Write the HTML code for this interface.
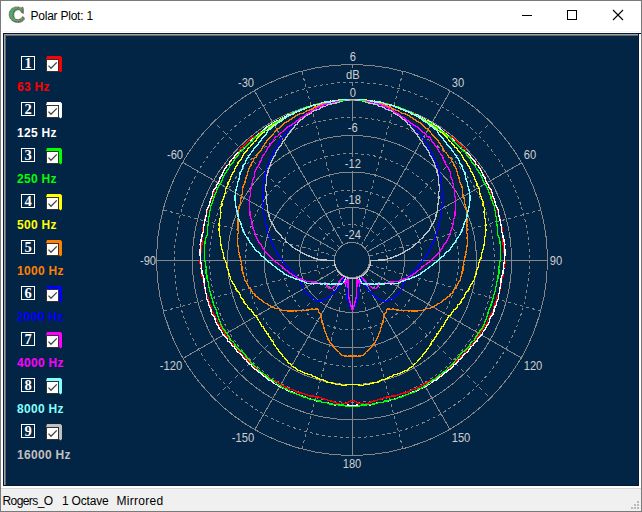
<!DOCTYPE html>
<html><head><meta charset="utf-8"><title>Polar Plot: 1</title>
<style>
html,body{margin:0;padding:0;}
body{width:642px;height:512px;position:relative;overflow:hidden;background:#fff;font-family:"Liberation Sans",sans-serif;}
.win{position:absolute;left:0;top:0;width:640px;height:510px;border:1px solid #7a7a7a;background:#fff;}
.title{position:absolute;left:30.5px;top:9px;font-size:12px;color:#000;white-space:nowrap;letter-spacing:-0.23px;}
.panel{position:absolute;left:3px;top:33px;width:636px;height:453px;background:#022445;}
.pb0{position:absolute;left:3px;top:33px;width:636px;height:453px;box-sizing:border-box;border:1px solid #001a38;}
.pb1{position:absolute;left:4px;top:34px;width:634px;height:451px;box-sizing:border-box;border-left:1px solid #a0a0a0;border-top:1px solid #a0a0a0;}
.pb2{position:absolute;left:5px;top:35px;width:633px;height:450px;box-sizing:border-box;border-left:1px solid #696969;border-top:1px solid #696969;}
.status{position:absolute;left:1px;top:488px;width:640px;height:23px;background:#f0f0f0;border-top:1px solid #d7d7d7;box-sizing:border-box;}
.status span{position:absolute;top:5px;font-size:12px;color:#000;white-space:nowrap;}
.nb{position:absolute;left:21px;width:12px;height:12px;border:1px solid #fff;color:#fff;font-weight:bold;font-family:"Liberation Serif",serif;font-size:14.5px;line-height:13px;text-align:center;}
.cs{position:absolute;left:46px;width:16px;height:17px;}
.cb{position:absolute;left:46px;width:11px;height:11px;background:#fff;border:1px solid #333;}
.cb svg{display:block}
.lb{position:absolute;left:17px;font-size:12px;font-weight:bold;white-space:nowrap;letter-spacing:0.3px;}
</style></head><body>
<div class="win"></div>
<svg style="position:absolute;left:0;top:0" width="32" height="30" viewBox="0 0 32 30"><path d="M22.8 7.2 L22.9 12.6 L21.4 12.6 C20.8 10.4 19.4 9.2 17.6 9.2 C14.8 9.2 13.2 11.4 13.2 14.4 C13.2 17.6 15 19.6 17.8 19.6 C19.8 19.6 21.4 18.6 22.6 16.6 L24.2 17.6 C22.6 20.4 20.2 21.9 17.2 21.9 C12.4 21.9 9.2 18.8 9.2 14.4 C9.2 10 12.4 6.9 17 6.9 C18.8 6.9 20.4 7.4 21.4 8.2 L21.8 7.2 Z" fill="#8e8e8e" transform="translate(1.1,1.1)"/><path d="M22.8 7.2 L22.9 12.6 L21.4 12.6 C20.8 10.4 19.4 9.2 17.6 9.2 C14.8 9.2 13.2 11.4 13.2 14.4 C13.2 17.6 15 19.6 17.8 19.6 C19.8 19.6 21.4 18.6 22.6 16.6 L24.2 17.6 C22.6 20.4 20.2 21.9 17.2 21.9 C12.4 21.9 9.2 18.8 9.2 14.4 C9.2 10 12.4 6.9 17 6.9 C18.8 6.9 20.4 7.4 21.4 8.2 L21.8 7.2 Z" fill="#3cb371" stroke="#9a1c1c" stroke-width="0.8" stroke-dasharray="1 0.5"/></svg>
<div style="position:absolute;left:1px;top:31px;width:640px;height:1px;background:#f4f4f4"></div><div class="title">Polar Plot: 1</div>
<svg style="position:absolute;left:520px;top:0" width="122" height="32" viewBox="0 0 122 32"><g fill="none" stroke="#000" stroke-width="1" shape-rendering="crispEdges"><path d="M2 15.5 H12"/><rect x="47.5" y="10.5" width="9" height="9"/></g><path d="M93 10 L103 20 M103 10 L93 20" stroke="#000" stroke-width="1.1" fill="none"/></svg>
<div class="panel"></div>
<svg width="636" height="453" viewBox="3 33 636 453" style="position:absolute;left:3px;top:33px" shape-rendering="crispEdges"><circle cx="352.0" cy="260.0" r="52.5" fill="none" stroke="#878787" stroke-width="1"/><circle cx="352.0" cy="260.0" r="88.0" fill="none" stroke="#878787" stroke-width="1"/><circle cx="352.0" cy="260.0" r="124.5" fill="none" stroke="#878787" stroke-width="1"/><circle cx="352.0" cy="260.0" r="159.7" fill="none" stroke="#878787" stroke-width="1"/><circle cx="352.0" cy="260.0" r="195.5" fill="none" stroke="#878787" stroke-width="1"/><circle cx="352.0" cy="260.0" r="35.2" fill="none" stroke="#878787" stroke-width="1" stroke-dasharray="3 3"/><circle cx="352.0" cy="260.0" r="70.0" fill="none" stroke="#878787" stroke-width="1" stroke-dasharray="3 3"/><circle cx="352.0" cy="260.0" r="106.4" fill="none" stroke="#878787" stroke-width="1" stroke-dasharray="3 3"/><circle cx="352.0" cy="260.0" r="142.4" fill="none" stroke="#878787" stroke-width="1" stroke-dasharray="3 3"/><circle cx="352.0" cy="260.0" r="177.6" fill="none" stroke="#878787" stroke-width="1" stroke-dasharray="3 3"/><line x1="352.5" y1="242.9" x2="352.5" y2="65.0" stroke="#878787" stroke-width="1"/><line x1="357.1" y1="243.5" x2="403.1" y2="71.7" stroke="#878787" stroke-width="1" stroke-dasharray="3.11 3.11"/><line x1="361.3" y1="245.3" x2="450.2" y2="91.2" stroke="#878787" stroke-width="1"/><line x1="364.9" y1="248.1" x2="490.7" y2="122.3" stroke="#878787" stroke-width="1" stroke-dasharray="4.24 4.24"/><line x1="367.7" y1="251.7" x2="521.8" y2="162.7" stroke="#878787" stroke-width="1"/><line x1="369.5" y1="255.9" x2="541.3" y2="209.9" stroke="#878787" stroke-width="1" stroke-dasharray="3.11 3.11"/><line x1="370.1" y1="260.5" x2="548.0" y2="260.5" stroke="#878787" stroke-width="1"/><line x1="369.5" y1="265.1" x2="541.3" y2="311.1" stroke="#878787" stroke-width="1" stroke-dasharray="3.11 3.11"/><line x1="367.7" y1="269.3" x2="521.8" y2="358.2" stroke="#878787" stroke-width="1"/><line x1="364.9" y1="272.9" x2="490.7" y2="398.7" stroke="#878787" stroke-width="1" stroke-dasharray="4.24 4.24"/><line x1="361.3" y1="275.7" x2="450.2" y2="429.8" stroke="#878787" stroke-width="1"/><line x1="357.1" y1="277.5" x2="403.1" y2="449.3" stroke="#878787" stroke-width="1" stroke-dasharray="3.11 3.11"/><line x1="352.5" y1="278.1" x2="352.5" y2="456.0" stroke="#878787" stroke-width="1"/><line x1="347.9" y1="277.5" x2="301.9" y2="449.3" stroke="#878787" stroke-width="1" stroke-dasharray="3.11 3.11"/><line x1="343.7" y1="275.7" x2="254.7" y2="429.8" stroke="#878787" stroke-width="1"/><line x1="340.1" y1="272.9" x2="214.3" y2="398.7" stroke="#878787" stroke-width="1" stroke-dasharray="4.24 4.24"/><line x1="337.3" y1="269.3" x2="183.2" y2="358.3" stroke="#878787" stroke-width="1"/><line x1="335.5" y1="265.1" x2="163.7" y2="311.1" stroke="#878787" stroke-width="1" stroke-dasharray="3.11 3.11"/><line x1="334.9" y1="260.5" x2="157.0" y2="260.5" stroke="#878787" stroke-width="1"/><line x1="335.5" y1="255.9" x2="163.7" y2="209.9" stroke="#878787" stroke-width="1" stroke-dasharray="3.11 3.11"/><line x1="337.3" y1="251.7" x2="183.2" y2="162.7" stroke="#878787" stroke-width="1"/><line x1="340.1" y1="248.1" x2="214.3" y2="122.3" stroke="#878787" stroke-width="1" stroke-dasharray="4.24 4.24"/><line x1="343.7" y1="245.3" x2="254.7" y2="91.2" stroke="#878787" stroke-width="1"/><line x1="347.9" y1="243.5" x2="301.9" y2="71.7" stroke="#878787" stroke-width="1" stroke-dasharray="3.11 3.11"/><circle cx="352.0" cy="260.0" r="17.5" fill="#022445" stroke="#878787" stroke-width="1"/><rect x="347.5" y="50" width="10" height="14" fill="#022445"/><rect x="344.5" y="68" width="16" height="14" fill="#022445"/><rect x="347.5" y="85.7" width="10" height="14" fill="#022445"/><rect x="344.5" y="121.19999999999999" width="16" height="14" fill="#022445"/><rect x="341.5" y="156.8" width="22" height="14" fill="#022445"/><rect x="341.5" y="193.1" width="22" height="14" fill="#022445"/><rect x="341.5" y="228.3" width="22" height="14" fill="#022445"/><path d="M352.5 400.0 L350.0 401.1 L347.5 402.9 L345.0 403.6 L342.5 404.1 L339.9 404.3 L337.5 403.4 L335.1 402.4 L332.7 401.6 L330.3 400.8 L327.9 400.2 L325.5 399.4 L323.1 398.8 L320.9 397.5 L318.5 397.0 L315.9 397.1 L313.6 396.1 L311.0 396.2 L308.6 395.6 L306.3 394.6 L304.0 393.7 L301.6 393.0 L299.0 392.9 L296.7 391.9 L294.7 390.4 L292.3 389.7 L289.7 389.2 L287.5 388.1 L285.3 386.9 L283.2 385.6 L280.8 384.7 L278.9 383.0 L276.8 381.6 L274.4 380.7 L272.0 379.9 L270.1 378.2 L268.0 376.7 L265.6 375.8 L263.7 374.1 L261.5 372.9 L259.6 371.2 L257.5 369.7 L255.6 368.2 L253.8 366.3 L252.1 364.5 L250.2 362.8 L248.6 360.9 L246.5 359.3 L244.9 357.4 L243.1 355.6 L241.1 354.0 L239.5 352.0 L238.3 349.7 L236.4 348.0 L234.8 346.0 L232.6 344.4 L230.9 342.5 L229.9 340.1 L228.3 338.1 L226.6 336.1 L225.1 334.1 L224.1 331.7 L222.4 329.7 L221.1 327.5 L219.7 325.3 L217.9 323.2 L217.4 320.6 L216.0 318.5 L215.1 316.0 L213.7 313.8 L212.2 311.6 L211.0 309.2 L211.1 306.4 L210.0 304.1 L209.0 301.6 L208.4 299.1 L207.7 296.6 L206.2 294.3 L205.5 291.8 L204.8 289.2 L204.6 286.6 L203.7 284.1 L203.5 281.4 L203.3 278.8 L202.1 276.3 L202.0 273.7 L201.5 271.1 L201.2 268.4 L200.8 265.8 L199.9 263.2 L200.1 260.5 L200.4 257.8 L200.1 255.2 L200.9 252.6 L201.7 250.0 L201.1 247.3 L202.0 244.7 L202.0 242.0 L201.8 239.3 L202.2 236.7 L202.5 234.1 L202.2 231.3 L202.6 228.6 L203.5 226.1 L204.2 223.5 L204.8 220.9 L204.7 218.1 L206.3 215.8 L206.8 213.2 L207.4 210.5 L208.2 208.0 L209.2 205.5 L209.7 202.8 L211.0 200.4 L212.2 198.0 L212.5 195.2 L214.0 192.9 L214.6 190.3 L215.3 187.6 L216.4 185.1 L218.1 182.9 L219.2 180.4 L219.8 177.6 L221.4 175.3 L222.8 173.0 L223.7 170.3 L225.1 167.9 L226.8 165.8 L228.5 163.7 L230.6 161.8 L232.0 159.4 L233.6 157.2 L236.0 155.6 L237.8 153.5 L239.3 151.2 L240.3 148.3 L242.7 146.8 L244.4 144.6 L246.7 143.0 L248.6 141.0 L250.4 138.9 L252.7 137.3 L255.4 136.2 L257.7 134.7 L259.4 132.4 L262.1 131.3 L264.2 129.6 L266.2 127.6 L268.3 125.8 L270.7 124.3 L273.2 123.1 L275.7 122.0 L278.2 120.8 L280.4 119.0 L282.9 117.9 L285.6 117.1 L287.9 115.4 L290.4 114.2 L293.0 113.3 L295.7 112.5 L298.1 111.0 L300.7 110.0 L303.3 109.0 L306.0 108.4 L308.5 107.1 L311.2 106.5 L313.8 105.2 L316.4 104.2 L319.2 103.7 L321.8 102.7 L324.7 102.8 L327.5 102.4 L330.2 101.6 L332.9 100.7 L335.7 100.5 L338.5 100.5 L341.3 100.2 L344.1 99.7 L346.9 99.7 L349.7 99.6 L352.5 99.5 L355.3 99.6 L358.1 99.7 L360.9 99.7 L363.7 100.2 L366.5 100.5 L369.3 100.5 L372.1 100.7 L374.8 101.6 L377.5 102.4 L380.3 102.8 L383.2 102.7 L385.8 103.7 L388.6 104.2 L391.2 105.2 L393.8 106.5 L396.5 107.1 L399.0 108.4 L401.7 109.0 L404.3 110.0 L406.9 111.0 L409.3 112.5 L412.0 113.3 L414.6 114.2 L417.1 115.4 L419.4 117.1 L422.1 117.9 L424.6 119.0 L426.8 120.8 L429.3 122.0 L431.8 123.1 L434.3 124.3 L436.7 125.8 L438.8 127.6 L440.8 129.6 L442.9 131.3 L445.6 132.4 L447.3 134.7 L449.6 136.2 L452.3 137.3 L454.6 138.9 L456.4 141.0 L458.3 143.0 L460.6 144.6 L462.3 146.8 L464.7 148.3 L465.7 151.2 L467.2 153.5 L469.0 155.6 L471.4 157.2 L473.0 159.4 L474.4 161.8 L476.5 163.7 L478.2 165.8 L479.9 167.9 L481.3 170.3 L482.2 173.0 L483.6 175.3 L485.2 177.6 L485.8 180.4 L486.9 182.9 L488.6 185.1 L489.7 187.6 L490.4 190.3 L491.0 192.9 L492.5 195.2 L492.8 198.0 L494.0 200.4 L495.3 202.8 L495.8 205.5 L496.8 208.0 L497.6 210.5 L498.2 213.2 L498.7 215.8 L500.3 218.1 L500.2 220.9 L500.8 223.5 L501.5 226.1 L502.4 228.6 L502.8 231.3 L502.5 234.1 L502.8 236.7 L503.2 239.3 L503.0 242.0 L503.0 244.7 L503.9 247.3 L503.3 250.0 L504.1 252.6 L504.9 255.2 L504.6 257.8 L504.9 260.5 L505.1 263.2 L504.2 265.8 L503.8 268.4 L503.5 271.1 L503.0 273.7 L502.9 276.3 L501.7 278.8 L501.5 281.4 L501.3 284.1 L500.4 286.6 L500.2 289.2 L499.5 291.8 L498.8 294.3 L497.3 296.6 L496.6 299.1 L496.0 301.6 L495.0 304.1 L493.9 306.4 L494.0 309.2 L492.8 311.6 L491.3 313.8 L489.9 316.0 L489.0 318.5 L487.6 320.6 L487.1 323.2 L485.3 325.3 L483.9 327.5 L482.6 329.7 L480.9 331.7 L479.9 334.1 L478.4 336.1 L476.7 338.1 L475.1 340.1 L474.1 342.5 L472.4 344.4 L470.2 346.0 L468.6 348.0 L466.7 349.7 L465.5 352.0 L463.9 354.0 L461.9 355.6 L460.1 357.4 L458.5 359.3 L456.4 360.9 L454.8 362.8 L452.9 364.5 L451.2 366.3 L449.4 368.2 L447.5 369.7 L445.4 371.2 L443.5 372.9 L441.3 374.1 L439.4 375.8 L437.0 376.7 L434.9 378.2 L433.0 379.9 L430.6 380.7 L428.2 381.6 L426.1 383.0 L424.2 384.7 L421.8 385.6 L419.7 386.9 L417.5 388.1 L415.3 389.2 L412.7 389.7 L410.3 390.4 L408.3 391.9 L406.0 392.9 L403.4 393.0 L401.0 393.7 L398.7 394.6 L396.4 395.6 L394.0 396.2 L391.4 396.1 L389.1 397.1 L386.5 397.0 L384.1 397.5 L381.9 398.8 L379.5 399.4 L377.1 400.2 L374.7 400.8 L372.3 401.6 L369.9 402.4 L367.5 403.4 L365.1 404.3 L362.5 404.1 L360.0 403.6 L357.5 402.9 L355.0 401.1 L352.5 400.0" fill="none" stroke="#ff0000" stroke-width="1.35" stroke-linejoin="round"/><path d="M352.5 405.7 L350.0 405.4 L347.5 405.0 L344.9 405.7 L342.4 404.6 L339.9 404.9 L337.3 404.8 L334.8 404.9 L332.3 404.5 L329.9 403.3 L327.4 403.0 L324.9 402.3 L322.3 402.5 L320.0 401.2 L317.3 401.6 L315.0 400.4 L312.7 399.4 L310.2 399.0 L307.7 398.4 L305.5 397.1 L303.1 396.2 L300.7 395.4 L298.3 394.6 L295.9 393.7 L293.7 392.5 L291.4 391.5 L288.7 391.3 L286.6 389.8 L284.5 388.4 L281.9 387.8 L279.6 386.7 L277.6 385.1 L275.2 384.2 L273.3 382.4 L271.4 380.7 L268.8 380.1 L266.8 378.5 L264.9 376.7 L262.6 375.5 L261.0 373.5 L258.9 372.1 L257.1 370.2 L254.6 369.2 L252.6 367.6 L251.5 365.1 L249.1 363.9 L247.2 362.2 L246.1 359.7 L243.7 358.5 L242.5 356.1 L240.6 354.4 L238.6 352.7 L236.8 350.9 L235.2 348.9 L233.9 346.7 L231.7 345.1 L230.5 342.8 L228.1 341.3 L227.1 338.9 L225.5 336.8 L223.3 335.1 L222.4 332.6 L220.8 330.5 L219.2 328.4 L218.2 326.0 L216.8 323.8 L215.4 321.5 L215.1 318.8 L213.8 316.5 L212.1 314.4 L211.2 311.9 L210.9 309.3 L209.9 306.8 L208.4 304.5 L208.3 301.9 L206.9 299.5 L206.6 296.9 L206.6 294.2 L205.2 291.8 L205.2 289.1 L204.7 286.6 L204.5 283.9 L203.9 281.4 L203.9 278.7 L203.2 276.2 L202.1 273.7 L202.0 271.0 L201.1 268.4 L201.5 265.8 L201.0 263.1 L200.3 260.5 L200.8 257.9 L200.1 255.2 L200.1 252.5 L200.1 249.8 L200.8 247.2 L200.0 244.5 L200.8 241.9 L201.1 239.2 L202.1 236.7 L202.2 234.0 L203.3 231.5 L203.6 228.9 L203.7 226.2 L204.3 223.5 L204.8 220.9 L205.5 218.3 L206.1 215.8 L206.3 213.0 L206.7 210.3 L207.9 207.9 L209.2 205.5 L209.8 202.8 L210.3 200.1 L211.4 197.7 L212.7 195.3 L212.8 192.4 L214.0 189.9 L215.8 187.8 L216.8 185.3 L218.1 182.9 L219.4 180.5 L220.0 177.7 L221.8 175.6 L222.7 172.9 L223.9 170.5 L225.4 168.2 L226.9 165.9 L229.1 164.1 L230.2 161.4 L231.8 159.2 L234.0 157.5 L235.2 154.9 L237.2 153.0 L239.8 151.6 L242.3 150.3 L244.2 148.4 L246.2 146.6 L248.3 144.7 L249.8 142.4 L251.5 140.1 L253.6 138.3 L255.8 136.7 L257.7 134.7 L259.9 133.1 L262.1 131.4 L264.1 129.4 L266.1 127.5 L268.4 126.0 L270.8 124.6 L273.1 123.0 L275.4 121.4 L278.2 120.7 L280.5 119.2 L282.9 117.9 L285.4 116.7 L287.7 115.0 L290.5 114.5 L293.2 113.7 L295.5 112.1 L298.3 111.5 L300.7 110.1 L303.4 109.4 L306.0 108.2 L308.5 107.0 L311.1 106.0 L313.7 104.9 L316.4 104.3 L319.2 103.7 L321.9 103.3 L324.7 102.8 L327.4 102.2 L330.1 101.0 L333.0 101.4 L335.7 100.9 L338.5 100.9 L341.3 100.5 L344.1 100.4 L346.9 99.7 L349.7 99.6 L352.5 99.5 L355.3 99.6 L358.1 99.7 L360.9 100.4 L363.7 100.5 L366.5 100.9 L369.3 100.9 L372.0 101.4 L374.9 101.0 L377.6 102.2 L380.3 102.8 L383.1 103.3 L385.8 103.7 L388.6 104.3 L391.3 104.9 L393.9 106.0 L396.5 107.0 L399.0 108.2 L401.6 109.4 L404.3 110.1 L406.7 111.5 L409.5 112.1 L411.8 113.7 L414.5 114.5 L417.3 115.0 L419.6 116.7 L422.1 117.9 L424.5 119.2 L426.8 120.7 L429.6 121.4 L431.9 123.0 L434.2 124.6 L436.6 126.0 L438.9 127.5 L440.9 129.4 L442.9 131.4 L445.1 133.1 L447.3 134.7 L449.2 136.7 L451.4 138.3 L453.5 140.1 L455.2 142.4 L456.7 144.7 L458.8 146.6 L460.8 148.4 L462.7 150.3 L465.2 151.6 L467.8 153.0 L469.8 154.9 L471.0 157.5 L473.2 159.2 L474.8 161.4 L475.9 164.1 L478.1 165.9 L479.6 168.2 L481.1 170.5 L482.3 172.9 L483.2 175.6 L485.0 177.7 L485.6 180.5 L486.9 182.9 L488.2 185.3 L489.2 187.8 L491.0 189.9 L492.2 192.4 L492.3 195.3 L493.6 197.7 L494.7 200.1 L495.2 202.8 L495.8 205.5 L497.1 207.9 L498.3 210.3 L498.7 213.0 L498.9 215.8 L499.5 218.3 L500.2 220.9 L500.7 223.5 L501.3 226.2 L501.4 228.9 L501.7 231.5 L502.8 234.0 L502.9 236.7 L503.9 239.2 L504.2 241.9 L505.0 244.5 L504.2 247.2 L504.9 249.8 L504.9 252.5 L504.9 255.2 L504.2 257.9 L504.7 260.5 L504.0 263.1 L503.5 265.8 L503.9 268.4 L503.0 271.0 L502.9 273.7 L501.8 276.2 L501.1 278.7 L501.1 281.4 L500.5 283.9 L500.3 286.6 L499.8 289.1 L499.8 291.8 L498.4 294.2 L498.4 296.9 L498.1 299.5 L496.7 301.9 L496.6 304.5 L495.1 306.8 L494.1 309.3 L493.8 311.9 L492.9 314.4 L491.2 316.5 L489.9 318.8 L489.6 321.5 L488.2 323.8 L486.8 326.0 L485.8 328.4 L484.2 330.5 L482.6 332.6 L481.7 335.1 L479.5 336.8 L477.9 338.9 L476.9 341.3 L474.5 342.8 L473.3 345.1 L471.1 346.7 L469.8 348.9 L468.2 350.9 L466.4 352.7 L464.4 354.4 L462.5 356.1 L461.3 358.5 L458.9 359.7 L457.8 362.2 L455.9 363.9 L453.5 365.1 L452.4 367.6 L450.4 369.2 L447.9 370.2 L446.1 372.1 L444.0 373.5 L442.4 375.5 L440.1 376.7 L438.2 378.5 L436.2 380.1 L433.6 380.7 L431.7 382.4 L429.8 384.2 L427.4 385.1 L425.4 386.7 L423.1 387.8 L420.5 388.4 L418.4 389.8 L416.3 391.3 L413.6 391.5 L411.3 392.5 L409.1 393.7 L406.7 394.6 L404.3 395.4 L401.9 396.2 L399.5 397.1 L397.3 398.4 L394.8 399.0 L392.3 399.4 L390.0 400.4 L387.7 401.6 L385.0 401.2 L382.7 402.5 L380.1 402.3 L377.6 403.0 L375.1 403.3 L372.7 404.5 L370.2 404.9 L367.7 404.8 L365.1 404.9 L362.6 404.6 L360.1 405.7 L357.5 405.0 L355.0 405.4 L352.5 405.7" fill="none" stroke="#ffffff" stroke-width="1.35" stroke-linejoin="round"/><path d="M352.5 406.0 L350.0 406.5 L347.4 406.3 L344.9 405.7 L342.4 404.8 L339.8 405.3 L337.4 404.4 L334.8 404.6 L332.4 403.9 L329.8 403.9 L327.4 402.9 L324.9 402.7 L322.4 402.3 L320.1 401.0 L317.5 401.0 L315.1 399.9 L312.7 399.4 L310.1 399.3 L307.8 398.1 L305.4 397.3 L302.9 396.7 L300.6 395.8 L298.4 394.4 L295.9 393.9 L293.5 393.0 L291.1 392.1 L288.9 390.8 L287.0 389.1 L284.5 388.4 L282.2 387.3 L280.2 385.7 L277.8 384.8 L276.0 382.9 L274.1 381.2 L272.1 379.7 L269.5 379.1 L267.8 377.1 L265.8 375.5 L263.9 373.9 L261.7 372.6 L259.8 370.9 L258.1 369.1 L256.4 367.3 L254.3 365.8 L252.6 364.0 L250.9 362.1 L249.3 360.1 L247.4 358.5 L246.1 356.3 L244.6 354.3 L242.9 352.5 L240.8 351.0 L238.7 349.4 L236.9 347.6 L235.3 345.7 L234.3 343.3 L232.6 341.4 L230.3 339.9 L229.6 337.3 L227.7 335.5 L226.7 333.1 L225.2 331.1 L223.6 329.0 L222.2 326.9 L221.1 324.6 L220.2 322.2 L219.0 319.9 L218.6 317.4 L217.5 315.0 L216.9 312.6 L216.4 310.0 L215.1 307.8 L214.1 305.5 L213.3 303.1 L212.6 300.6 L211.9 298.2 L211.3 295.7 L210.4 293.3 L209.8 290.8 L209.7 288.3 L208.4 285.9 L208.6 283.3 L207.7 280.8 L206.9 278.4 L207.1 275.8 L206.1 273.3 L205.9 270.7 L206.3 268.2 L205.8 265.6 L205.5 263.1 L204.8 260.5 L204.6 257.9 L204.3 255.3 L204.3 252.7 L204.6 250.2 L204.6 247.6 L204.7 245.0 L205.0 242.4 L205.3 239.8 L206.0 237.3 L207.4 234.9 L207.5 232.3 L207.5 229.7 L207.5 227.0 L208.1 224.5 L208.9 222.0 L208.3 219.2 L208.9 216.6 L209.7 214.1 L209.7 211.3 L210.8 208.9 L210.8 206.1 L212.0 203.7 L212.8 201.2 L213.8 198.7 L214.2 196.0 L215.4 193.6 L216.5 191.2 L217.3 188.6 L218.7 186.3 L220.2 184.1 L221.5 181.8 L222.5 179.3 L223.4 176.7 L224.6 174.2 L226.3 172.1 L227.5 169.7 L229.3 167.7 L230.2 164.9 L232.4 163.3 L233.6 160.8 L235.2 158.6 L237.1 156.6 L238.5 154.2 L240.0 151.9 L242.3 150.3 L243.7 147.9 L246.2 146.6 L248.1 144.5 L250.0 142.6 L252.2 140.9 L253.8 138.7 L256.0 136.9 L258.1 135.2 L260.1 133.3 L262.5 132.0 L264.7 130.4 L266.7 128.3 L268.8 126.6 L271.5 125.6 L273.4 123.5 L275.9 122.3 L278.3 120.9 L280.8 119.8 L283.0 118.0 L285.7 117.2 L288.0 115.7 L290.5 114.5 L292.8 112.8 L295.5 111.9 L297.9 110.5 L300.6 109.7 L303.1 108.6 L305.7 107.4 L308.4 106.6 L311.1 106.2 L313.7 105.1 L316.5 104.8 L319.1 103.3 L321.9 103.3 L324.6 102.2 L327.4 102.2 L330.2 101.8 L332.9 100.9 L335.7 100.8 L338.5 100.4 L341.3 100.2 L344.1 99.9 L346.9 99.7 L349.7 99.6 L352.5 99.5 L355.3 99.6 L358.1 99.7 L360.9 99.9 L363.7 100.2 L366.5 100.4 L369.3 100.8 L372.1 100.9 L374.8 101.8 L377.6 102.2 L380.4 102.2 L383.1 103.3 L385.9 103.3 L388.5 104.8 L391.3 105.1 L393.9 106.2 L396.6 106.6 L399.3 107.4 L401.9 108.6 L404.4 109.7 L407.1 110.5 L409.5 111.9 L412.2 112.8 L414.5 114.5 L417.0 115.7 L419.3 117.2 L422.0 118.0 L424.2 119.8 L426.7 120.9 L429.1 122.3 L431.6 123.5 L433.5 125.6 L436.2 126.6 L438.3 128.3 L440.3 130.4 L442.5 132.0 L444.9 133.3 L446.9 135.2 L449.0 136.9 L451.2 138.7 L452.8 140.9 L455.0 142.6 L456.9 144.5 L458.8 146.6 L461.3 147.9 L462.7 150.3 L465.0 151.9 L466.5 154.2 L467.9 156.6 L469.8 158.6 L471.4 160.8 L472.6 163.3 L474.8 164.9 L475.7 167.7 L477.5 169.7 L478.7 172.1 L480.4 174.2 L481.6 176.7 L482.5 179.3 L483.5 181.8 L484.8 184.1 L486.3 186.3 L487.7 188.6 L488.5 191.2 L489.6 193.6 L490.8 196.0 L491.2 198.7 L492.2 201.2 L493.0 203.7 L494.2 206.1 L494.2 208.9 L495.3 211.3 L495.3 214.1 L496.1 216.6 L496.7 219.2 L496.1 222.0 L496.9 224.5 L497.5 227.0 L497.5 229.7 L497.5 232.3 L497.6 234.9 L499.0 237.3 L499.7 239.8 L500.0 242.4 L500.3 245.0 L500.4 247.6 L500.4 250.2 L500.7 252.7 L500.7 255.3 L500.4 257.9 L500.2 260.5 L499.5 263.1 L499.2 265.6 L498.7 268.2 L499.1 270.7 L498.9 273.3 L497.9 275.8 L498.1 278.4 L497.3 280.8 L496.4 283.3 L496.6 285.9 L495.3 288.3 L495.2 290.8 L494.6 293.3 L493.7 295.7 L493.1 298.2 L492.4 300.6 L491.7 303.1 L490.9 305.5 L489.9 307.8 L488.6 310.0 L488.1 312.6 L487.5 315.0 L486.4 317.4 L486.0 319.9 L484.8 322.2 L483.9 324.6 L482.8 326.9 L481.4 329.0 L479.8 331.1 L478.3 333.1 L477.3 335.5 L475.4 337.3 L474.7 339.9 L472.4 341.4 L470.7 343.3 L469.7 345.7 L468.1 347.6 L466.3 349.4 L464.2 351.0 L462.1 352.5 L460.4 354.3 L458.9 356.3 L457.6 358.5 L455.7 360.1 L454.1 362.1 L452.4 364.0 L450.7 365.8 L448.6 367.3 L446.9 369.1 L445.2 370.9 L443.3 372.6 L441.1 373.9 L439.2 375.5 L437.2 377.1 L435.5 379.1 L432.9 379.7 L430.9 381.2 L429.0 382.9 L427.2 384.8 L424.8 385.7 L422.8 387.3 L420.5 388.4 L418.0 389.1 L416.1 390.8 L413.9 392.1 L411.5 393.0 L409.1 393.9 L406.6 394.4 L404.4 395.8 L402.1 396.7 L399.6 397.3 L397.2 398.1 L394.9 399.3 L392.3 399.4 L389.9 399.9 L387.5 401.0 L384.9 401.0 L382.6 402.3 L380.1 402.7 L377.6 402.9 L375.2 403.9 L372.6 403.9 L370.2 404.6 L367.6 404.4 L365.2 405.3 L362.6 404.8 L360.1 405.7 L357.6 406.3 L355.0 406.5 L352.5 406.0" fill="none" stroke="#00ff00" stroke-width="1.35" stroke-linejoin="round"/><path d="M352.5 384.9 L350.3 384.5 L348.2 384.7 L346.0 385.0 L343.8 385.3 L341.6 385.2 L339.5 384.0 L337.3 384.5 L335.1 384.0 L333.1 383.2 L330.9 382.9 L328.8 382.4 L326.7 381.9 L324.8 380.6 L322.8 379.8 L320.6 379.7 L318.7 378.4 L316.6 377.9 L314.8 376.5 L312.7 376.1 L311.0 374.5 L308.8 374.4 L306.8 373.7 L304.6 373.3 L302.8 372.1 L300.9 371.2 L298.9 370.4 L296.8 369.8 L295.5 367.8 L293.4 367.0 L291.7 365.8 L290.4 363.8 L288.6 362.8 L287.2 361.1 L285.8 359.4 L284.6 357.4 L282.9 356.3 L281.7 354.4 L280.4 352.7 L278.6 351.7 L277.9 349.4 L276.7 347.7 L275.3 346.3 L274.2 344.5 L273.3 342.5 L272.4 340.6 L270.9 339.3 L269.8 337.6 L268.6 336.1 L268.0 333.9 L266.5 332.7 L265.4 331.0 L264.5 329.2 L263.7 327.4 L262.0 326.2 L261.2 324.4 L260.0 322.9 L259.1 321.1 L258.0 319.5 L257.1 317.8 L256.2 316.1 L254.3 314.9 L253.2 313.3 L252.3 311.5 L251.1 310.0 L249.1 308.7 L247.9 307.0 L247.3 305.2 L245.3 303.8 L244.0 302.1 L243.6 300.1 L242.0 298.6 L240.6 296.8 L240.3 294.8 L239.2 293.0 L237.5 291.3 L236.1 289.5 L235.8 287.4 L234.6 285.6 L233.1 283.7 L232.4 281.7 L230.8 279.8 L230.7 277.6 L229.5 275.6 L228.9 273.5 L228.5 271.3 L227.9 269.2 L226.5 267.1 L226.6 264.9 L226.0 262.7 L225.3 260.5 L224.0 258.3 L223.6 256.0 L223.5 253.7 L222.7 251.4 L221.8 249.1 L221.3 246.7 L220.9 244.3 L220.2 241.9 L220.5 239.6 L220.2 237.2 L219.5 234.7 L219.7 232.3 L218.9 229.7 L219.5 227.3 L219.0 224.7 L219.4 222.3 L219.7 219.9 L220.2 217.5 L220.4 215.0 L220.9 212.6 L220.7 209.9 L220.8 207.3 L222.1 205.2 L221.7 202.3 L222.6 199.9 L223.7 197.7 L224.5 195.3 L225.4 192.9 L225.5 190.1 L226.3 187.7 L227.8 185.6 L228.1 182.8 L229.7 180.8 L230.3 178.1 L231.3 175.7 L232.7 173.4 L234.0 171.2 L235.0 168.7 L236.3 166.4 L237.6 164.1 L238.6 161.5 L240.6 159.7 L242.2 157.6 L243.3 155.0 L244.8 152.8 L246.7 150.9 L247.9 148.3 L250.2 146.9 L251.9 144.8 L253.4 142.5 L255.5 140.7 L257.3 138.6 L259.2 136.6 L260.9 134.5 L263.1 132.9 L265.5 131.5 L267.5 129.6 L269.6 127.9 L272.1 126.7 L274.1 124.7 L276.7 123.7 L278.7 121.7 L281.0 120.3 L283.5 119.0 L285.9 117.6 L288.3 116.2 L290.5 114.4 L293.3 114.0 L295.5 111.9 L298.2 111.2 L300.6 109.7 L303.5 109.6 L305.9 108.2 L308.5 106.9 L311.1 106.0 L313.9 105.5 L316.5 104.5 L319.3 104.3 L321.9 103.1 L324.6 102.5 L327.5 102.3 L330.2 101.7 L332.9 101.0 L335.7 101.0 L338.5 100.1 L341.3 99.9 L344.1 100.0 L346.9 99.7 L349.7 99.6 L352.5 99.5 L355.3 99.6 L358.1 99.7 L360.9 100.0 L363.7 99.9 L366.5 100.1 L369.3 101.0 L372.1 101.0 L374.8 101.7 L377.5 102.3 L380.4 102.5 L383.1 103.1 L385.7 104.3 L388.5 104.5 L391.1 105.5 L393.9 106.0 L396.5 106.9 L399.1 108.2 L401.5 109.6 L404.4 109.7 L406.8 111.2 L409.5 111.9 L411.7 114.0 L414.5 114.4 L416.7 116.2 L419.1 117.6 L421.5 119.0 L424.0 120.3 L426.3 121.7 L428.3 123.7 L430.9 124.7 L432.9 126.7 L435.4 127.9 L437.5 129.6 L439.5 131.5 L441.9 132.9 L444.1 134.5 L445.8 136.6 L447.7 138.6 L449.5 140.7 L451.6 142.5 L453.1 144.8 L454.8 146.9 L457.1 148.3 L458.3 150.9 L460.2 152.8 L461.7 155.0 L462.8 157.6 L464.4 159.7 L466.4 161.5 L467.4 164.1 L468.7 166.4 L470.0 168.7 L471.0 171.2 L472.3 173.4 L473.7 175.7 L474.7 178.1 L475.3 180.8 L476.9 182.8 L477.2 185.6 L478.7 187.7 L479.5 190.1 L479.6 192.9 L480.5 195.3 L481.3 197.7 L482.4 199.9 L483.3 202.3 L482.9 205.2 L484.2 207.3 L484.3 209.9 L484.1 212.6 L484.6 215.0 L484.8 217.5 L485.3 219.9 L485.6 222.3 L486.0 224.7 L485.5 227.3 L486.1 229.7 L485.3 232.3 L485.5 234.7 L484.8 237.2 L484.5 239.6 L484.8 241.9 L484.1 244.3 L483.7 246.7 L483.2 249.1 L482.3 251.4 L481.5 253.7 L481.4 256.0 L481.0 258.3 L479.7 260.5 L479.0 262.7 L478.4 264.9 L478.5 267.1 L477.1 269.2 L476.5 271.3 L476.1 273.5 L475.5 275.6 L474.3 277.6 L474.2 279.8 L472.6 281.7 L471.9 283.7 L470.4 285.6 L469.2 287.4 L468.9 289.5 L467.5 291.3 L465.8 293.0 L464.7 294.8 L464.4 296.8 L463.0 298.6 L461.4 300.1 L461.0 302.1 L459.7 303.8 L457.7 305.2 L457.1 307.0 L455.9 308.7 L453.9 310.0 L452.7 311.5 L451.8 313.3 L450.7 314.9 L448.8 316.1 L447.9 317.8 L447.0 319.5 L445.9 321.1 L445.0 322.9 L443.8 324.4 L443.0 326.2 L441.3 327.4 L440.5 329.2 L439.6 331.0 L438.5 332.7 L437.0 333.9 L436.4 336.1 L435.2 337.6 L434.1 339.3 L432.6 340.6 L431.7 342.5 L430.8 344.5 L429.7 346.3 L428.3 347.7 L427.1 349.4 L426.4 351.7 L424.6 352.7 L423.3 354.4 L422.1 356.3 L420.4 357.4 L419.2 359.4 L417.8 361.1 L416.4 362.8 L414.6 363.8 L413.3 365.8 L411.6 367.0 L409.5 367.8 L408.2 369.8 L406.1 370.4 L404.1 371.2 L402.2 372.1 L400.4 373.3 L398.2 373.7 L396.2 374.4 L394.0 374.5 L392.3 376.1 L390.2 376.5 L388.4 377.9 L386.3 378.4 L384.4 379.7 L382.2 379.8 L380.2 380.6 L378.3 381.9 L376.2 382.4 L374.1 382.9 L371.9 383.2 L369.9 384.0 L367.7 384.5 L365.5 384.0 L363.4 385.2 L361.2 385.3 L359.0 385.0 L356.8 384.7 L354.7 384.5 L352.5 384.9" fill="none" stroke="#ffff00" stroke-width="1.35" stroke-linejoin="round"/><path d="M352.5 356.7 L350.8 355.9 L349.2 356.1 L347.5 356.3 L345.8 356.0 L344.2 355.8 L342.5 355.4 L340.9 354.6 L339.6 352.4 L338.1 351.4 L336.6 350.4 L335.3 348.8 L334.0 347.5 L332.7 346.1 L331.6 344.3 L330.4 343.1 L329.4 341.1 L328.3 339.8 L327.5 337.4 L326.6 335.7 L325.9 333.5 L325.2 331.6 L324.3 330.3 L324.1 327.5 L323.4 325.8 L322.7 324.3 L322.1 322.8 L321.9 320.5 L321.3 319.3 L321.1 317.2 L320.9 315.2 L320.4 314.0 L319.4 313.5 L318.9 312.3 L318.5 311.0 L318.0 309.8 L317.4 308.8 L316.0 308.9 L314.2 309.5 L313.1 309.2 L311.8 309.0 L309.7 309.7 L308.0 310.0 L306.3 310.1 L304.3 310.4 L302.7 310.3 L300.7 310.6 L299.0 310.4 L296.6 310.9 L294.6 310.8 L292.1 311.2 L290.3 310.9 L287.9 311.0 L285.9 310.7 L283.7 310.5 L281.6 310.1 L280.3 309.2 L278.2 308.7 L275.6 308.6 L274.0 307.6 L272.1 306.9 L270.5 306.0 L268.3 305.2 L267.2 304.0 L265.1 303.1 L263.8 301.9 L262.4 300.6 L260.5 299.6 L259.1 298.2 L257.4 297.0 L255.4 295.8 L254.6 294.2 L252.8 292.9 L251.6 291.4 L251.4 289.5 L249.4 288.1 L248.5 286.4 L247.6 284.7 L246.7 283.0 L245.8 281.2 L244.3 279.6 L244.6 277.6 L243.7 275.8 L243.2 273.9 L243.0 272.0 L242.0 270.2 L242.0 268.2 L241.9 266.3 L241.0 264.4 L241.5 262.4 L240.7 260.5 L240.3 258.5 L240.0 256.6 L239.1 254.6 L239.3 252.6 L238.2 250.5 L238.5 248.5 L238.1 246.5 L237.8 244.4 L237.8 242.3 L237.4 240.2 L238.0 238.2 L237.4 236.0 L237.9 234.0 L238.5 232.1 L237.6 229.7 L238.2 227.7 L238.0 225.5 L238.2 223.4 L237.9 221.0 L238.0 218.8 L238.5 216.8 L238.6 214.5 L238.7 212.2 L238.6 209.8 L239.0 207.6 L239.4 205.3 L240.5 203.4 L240.7 201.1 L240.8 198.6 L241.5 196.4 L242.2 194.2 L242.4 191.7 L242.5 189.1 L243.0 186.7 L243.8 184.4 L244.9 182.4 L245.7 180.1 L246.1 177.3 L247.2 175.2 L247.7 172.6 L248.5 170.1 L249.4 167.7 L250.9 165.8 L251.4 162.8 L253.1 161.1 L253.9 158.4 L256.1 157.1 L257.3 154.7 L259.0 152.9 L260.8 151.2 L261.8 148.4 L263.3 146.3 L264.7 144.0 L266.3 141.8 L267.8 139.6 L269.7 137.7 L271.5 135.8 L273.3 133.8 L275.1 131.7 L277.0 129.7 L279.1 128.1 L281.3 126.5 L283.2 124.5 L285.2 122.5 L287.7 121.4 L289.8 119.7 L292.2 118.4 L294.5 116.8 L296.8 115.4 L299.2 114.1 L301.9 113.5 L304.4 112.5 L306.7 110.6 L309.4 110.3 L311.9 109.0 L314.3 107.2 L317.0 106.6 L319.4 105.0 L322.1 104.1 L324.9 103.7 L327.6 103.1 L330.2 102.0 L333.0 102.0 L335.8 101.5 L338.6 101.3 L341.3 100.8 L344.1 100.0 L346.9 99.9 L349.7 99.7 L352.5 99.5 L355.3 99.7 L358.1 99.9 L360.9 100.0 L363.7 100.8 L366.4 101.3 L369.2 101.5 L372.0 102.0 L374.8 102.0 L377.4 103.1 L380.1 103.7 L382.9 104.1 L385.6 105.0 L388.0 106.6 L390.7 107.2 L393.1 109.0 L395.6 110.3 L398.3 110.6 L400.6 112.5 L403.1 113.5 L405.8 114.1 L408.2 115.4 L410.5 116.8 L412.8 118.4 L415.2 119.7 L417.3 121.4 L419.8 122.5 L421.8 124.5 L423.7 126.5 L425.9 128.1 L428.0 129.7 L429.9 131.7 L431.7 133.8 L433.5 135.8 L435.3 137.7 L437.2 139.6 L438.7 141.8 L440.3 144.0 L441.7 146.3 L443.2 148.4 L444.2 151.2 L446.0 152.9 L447.7 154.7 L448.9 157.1 L451.1 158.4 L451.9 161.1 L453.6 162.8 L454.1 165.8 L455.6 167.7 L456.5 170.1 L457.3 172.6 L457.8 175.2 L458.9 177.3 L459.3 180.1 L460.1 182.4 L461.2 184.4 L462.0 186.7 L462.5 189.1 L462.6 191.7 L462.8 194.2 L463.5 196.4 L464.2 198.6 L464.3 201.1 L464.5 203.4 L465.6 205.3 L466.0 207.6 L466.4 209.8 L466.3 212.2 L466.4 214.5 L466.5 216.8 L467.0 218.8 L467.1 221.0 L466.8 223.4 L467.0 225.5 L466.8 227.7 L467.4 229.7 L466.5 232.1 L467.1 234.0 L467.6 236.0 L467.0 238.2 L467.6 240.2 L467.2 242.3 L467.2 244.4 L466.9 246.5 L466.5 248.5 L466.8 250.5 L465.7 252.6 L465.9 254.6 L465.0 256.6 L464.7 258.5 L464.3 260.5 L463.5 262.4 L464.0 264.4 L463.1 266.3 L463.0 268.2 L463.0 270.2 L462.0 272.0 L461.8 273.9 L461.3 275.8 L460.4 277.6 L460.7 279.6 L459.2 281.2 L458.3 283.0 L457.4 284.7 L456.5 286.4 L455.6 288.1 L453.6 289.5 L453.4 291.4 L452.2 292.9 L450.4 294.2 L449.6 295.8 L447.6 297.0 L445.9 298.2 L444.5 299.6 L442.6 300.6 L441.2 301.9 L439.9 303.1 L437.8 304.0 L436.7 305.2 L434.5 306.0 L432.9 306.9 L431.0 307.6 L429.4 308.6 L426.8 308.7 L424.7 309.2 L423.4 310.1 L421.3 310.5 L419.1 310.7 L417.1 311.0 L414.7 310.9 L412.9 311.2 L410.4 310.8 L408.4 310.9 L406.0 310.4 L404.3 310.6 L402.3 310.3 L400.7 310.4 L398.7 310.1 L397.0 310.0 L395.3 309.7 L393.2 309.0 L391.9 309.2 L390.8 309.5 L389.0 308.9 L387.6 308.8 L387.0 309.8 L386.5 311.0 L386.1 312.3 L385.6 313.5 L384.6 314.0 L384.1 315.2 L383.9 317.2 L383.7 319.3 L383.1 320.5 L382.9 322.8 L382.3 324.3 L381.6 325.8 L380.9 327.5 L380.7 330.3 L379.8 331.6 L379.1 333.5 L378.4 335.7 L377.5 337.4 L376.7 339.8 L375.6 341.1 L374.6 343.1 L373.4 344.3 L372.3 346.1 L371.0 347.5 L369.7 348.8 L368.4 350.4 L366.9 351.4 L365.4 352.4 L364.1 354.6 L362.5 355.4 L360.8 355.8 L359.2 356.0 L357.5 356.3 L355.8 356.1 L354.2 355.9 L352.5 356.7" fill="none" stroke="#ff8000" stroke-width="1.35" stroke-linejoin="round"/><path d="M352.5 310.5 L351.7 308.4 L350.9 307.2 L350.1 306.4 L349.4 304.6 L348.7 304.2 L348.1 301.9 L347.6 300.5 L347.2 298.1 L347.1 294.9 L346.7 293.5 L346.5 291.1 L346.5 288.6 L346.6 286.2 L346.8 283.3 L347.4 279.6 L347.5 277.8 L347.2 277.7 L346.9 277.6 L346.6 277.5 L346.3 277.4 L346.0 277.3 L345.8 277.2 L345.5 277.1 L345.2 276.9 L344.2 278.3 L342.4 281.3 L339.9 285.3 L337.7 288.3 L335.5 291.2 L334.0 292.5 L332.2 294.3 L330.2 296.2 L328.5 297.5 L327.0 298.3 L325.3 299.4 L324.1 299.6 L322.3 300.6 L320.8 301.0 L319.5 301.3 L318.5 301.0 L317.3 301.0 L316.7 300.3 L315.2 300.5 L314.8 299.6 L314.1 298.9 L313.4 298.3 L311.9 298.4 L311.0 297.9 L310.3 297.2 L309.9 296.2 L309.2 295.6 L308.7 294.7 L307.6 294.4 L307.2 293.4 L306.5 292.7 L305.7 292.1 L305.3 291.2 L304.5 290.5 L303.7 289.8 L303.4 288.8 L303.1 287.9 L302.3 287.2 L302.6 285.9 L301.7 285.3 L301.6 284.3 L301.0 283.4 L300.8 282.4 L300.2 281.6 L299.8 280.7 L299.0 280.0 L298.5 279.1 L297.5 278.4 L297.4 277.4 L296.7 276.5 L296.0 275.6 L294.3 275.0 L294.4 273.9 L292.9 273.2 L292.3 272.2 L291.3 271.3 L290.5 270.3 L289.2 269.4 L288.2 268.4 L288.2 267.3 L286.6 266.3 L286.0 265.1 L285.4 264.0 L283.7 262.9 L283.3 261.7 L282.4 260.5 L281.4 259.3 L280.8 258.0 L279.4 256.7 L278.1 255.3 L277.8 254.0 L276.4 252.5 L276.2 251.1 L275.3 249.6 L274.8 248.2 L273.3 246.5 L273.4 245.1 L272.0 243.4 L271.9 241.9 L271.0 240.2 L269.6 238.3 L269.7 236.8 L269.0 235.0 L267.8 233.0 L267.5 231.2 L266.9 229.4 L267.0 227.7 L266.1 225.6 L265.8 223.7 L265.4 221.7 L265.1 219.7 L264.3 217.5 L264.4 215.6 L263.4 213.1 L263.5 211.2 L263.6 209.2 L262.8 206.6 L263.1 204.6 L262.3 201.9 L262.4 199.7 L263.1 197.9 L263.0 195.5 L262.7 192.9 L262.7 190.3 L263.3 188.2 L263.7 186.0 L263.7 183.3 L264.0 180.9 L264.3 178.2 L265.0 176.0 L265.1 173.1 L266.0 170.9 L266.7 168.5 L267.4 165.9 L268.3 163.7 L269.5 161.5 L270.2 158.8 L271.4 156.7 L272.8 154.8 L273.6 151.9 L275.2 150.1 L276.2 147.4 L277.6 145.1 L278.9 142.8 L280.2 140.3 L281.8 138.1 L283.3 135.7 L285.3 134.1 L287.1 132.1 L288.7 129.7 L290.4 127.2 L292.3 125.3 L294.3 123.4 L296.5 121.8 L298.4 119.4 L300.7 118.2 L303.0 116.6 L305.1 114.7 L307.5 113.4 L309.9 111.9 L312.5 111.2 L314.8 109.4 L317.4 108.4 L320.0 107.8 L322.5 106.2 L325.1 105.3 L327.7 104.2 L330.4 103.2 L333.1 102.5 L335.9 102.2 L338.6 102.1 L341.4 101.3 L344.1 100.7 L346.9 100.2 L349.7 99.8 L352.5 99.5 L355.3 99.8 L358.1 100.2 L360.9 100.7 L363.6 101.3 L366.4 102.1 L369.1 102.2 L371.9 102.5 L374.6 103.2 L377.3 104.2 L379.9 105.3 L382.5 106.2 L385.0 107.8 L387.6 108.4 L390.2 109.4 L392.5 111.2 L395.1 111.9 L397.5 113.4 L399.9 114.7 L402.0 116.6 L404.3 118.2 L406.6 119.4 L408.5 121.8 L410.7 123.4 L412.7 125.3 L414.6 127.2 L416.3 129.7 L417.9 132.1 L419.7 134.1 L421.7 135.7 L423.2 138.1 L424.8 140.3 L426.1 142.8 L427.4 145.1 L428.8 147.4 L429.8 150.1 L431.4 151.9 L432.2 154.8 L433.6 156.7 L434.8 158.8 L435.5 161.5 L436.7 163.7 L437.6 165.9 L438.3 168.5 L439.0 170.9 L439.9 173.1 L440.0 176.0 L440.7 178.2 L441.0 180.9 L441.3 183.3 L441.3 186.0 L441.7 188.2 L442.3 190.3 L442.3 192.9 L442.0 195.5 L441.9 197.9 L442.6 199.7 L442.7 201.9 L441.9 204.6 L442.2 206.6 L441.4 209.2 L441.5 211.2 L441.6 213.1 L440.6 215.6 L440.7 217.5 L439.9 219.7 L439.6 221.7 L439.2 223.7 L438.9 225.6 L438.0 227.7 L438.1 229.4 L437.5 231.2 L437.2 233.0 L436.0 235.0 L435.3 236.8 L435.4 238.3 L434.0 240.2 L433.1 241.9 L433.0 243.4 L431.6 245.1 L431.7 246.5 L430.2 248.2 L429.7 249.6 L428.8 251.1 L428.6 252.5 L427.2 254.0 L426.9 255.3 L425.6 256.7 L424.2 258.0 L423.6 259.3 L422.6 260.5 L421.7 261.7 L421.3 262.9 L419.6 264.0 L419.0 265.1 L418.4 266.3 L416.8 267.3 L416.8 268.4 L415.8 269.4 L414.5 270.3 L413.7 271.3 L412.7 272.2 L412.1 273.2 L410.6 273.9 L410.7 275.0 L409.0 275.6 L408.3 276.5 L407.6 277.4 L407.5 278.4 L406.5 279.1 L406.0 280.0 L405.2 280.7 L404.8 281.6 L404.2 282.4 L404.0 283.4 L403.4 284.3 L403.3 285.3 L402.4 285.9 L402.7 287.2 L401.9 287.9 L401.6 288.8 L401.3 289.8 L400.5 290.5 L399.7 291.2 L399.3 292.1 L398.5 292.7 L397.8 293.4 L397.4 294.4 L396.3 294.7 L395.8 295.6 L395.1 296.2 L394.7 297.2 L394.0 297.9 L393.1 298.4 L391.6 298.3 L390.9 298.9 L390.2 299.6 L389.8 300.5 L388.3 300.3 L387.7 301.0 L386.5 301.0 L385.5 301.3 L384.2 301.0 L382.7 300.6 L380.9 299.6 L379.7 299.4 L378.0 298.3 L376.5 297.5 L374.8 296.2 L372.8 294.3 L371.0 292.5 L369.5 291.2 L367.3 288.3 L365.1 285.3 L362.6 281.3 L360.8 278.3 L359.8 276.9 L359.5 277.1 L359.2 277.2 L359.0 277.3 L358.7 277.4 L358.4 277.5 L358.1 277.6 L357.8 277.7 L357.5 277.8 L357.6 279.6 L358.2 283.3 L358.4 286.2 L358.5 288.6 L358.5 291.1 L358.3 293.5 L357.9 294.9 L357.8 298.1 L357.4 300.5 L356.9 301.9 L356.3 304.2 L355.6 304.6 L354.9 306.4 L354.1 307.2 L353.3 308.4 L352.5 310.5" fill="none" stroke="#0000ff" stroke-width="1.35" stroke-linejoin="round"/><path d="M352.5 311.3 L351.7 308.4 L350.9 305.8 L350.3 303.3 L349.7 300.8 L349.1 298.8 L348.7 296.3 L348.5 292.9 L348.2 291.1 L348.2 287.7 L348.0 285.9 L348.0 283.5 L348.0 281.7 L348.1 279.5 L348.1 278.0 L347.8 277.9 L346.7 280.8 L345.2 284.3 L345.1 283.3 L344.9 282.7 L345.0 281.1 L345.3 279.3 L345.2 278.7 L345.5 277.1 L345.2 276.9 L344.9 276.8 L344.6 276.7 L344.3 276.5 L344.0 276.4 L343.3 277.2 L342.1 278.5 L341.0 279.7 L339.3 281.6 L337.4 283.8 L335.6 285.5 L334.0 286.9 L332.9 287.5 L331.5 288.4 L330.4 288.8 L329.7 288.7 L328.8 288.8 L328.6 288.0 L328.2 287.5 L327.8 287.0 L327.5 286.4 L327.1 285.9 L326.5 285.6 L326.2 285.0 L325.6 284.7 L325.5 284.0 L324.6 283.9 L323.8 283.8 L322.9 283.6 L321.9 283.6 L320.6 283.7 L320.3 283.0 L318.6 283.3 L317.7 283.1 L316.4 283.1 L316.0 282.4 L315.0 282.1 L313.6 282.1 L312.3 281.9 L310.7 281.8 L308.9 281.7 L307.9 281.3 L306.1 281.2 L305.5 280.5 L303.7 280.2 L302.7 279.6 L301.4 279.1 L299.1 278.9 L298.0 278.2 L297.3 277.4 L295.7 276.8 L294.6 276.0 L293.1 275.3 L291.5 274.6 L290.8 273.6 L289.4 272.8 L288.3 271.8 L287.4 270.8 L285.8 269.9 L284.5 268.9 L283.4 267.8 L282.2 266.7 L280.8 265.5 L279.0 264.4 L277.2 263.1 L275.5 261.8 L274.3 260.5 L273.0 259.1 L271.5 257.7 L269.6 256.2 L268.5 254.6 L266.6 253.0 L264.9 251.3 L264.4 249.7 L262.5 247.9 L261.8 246.1 L260.6 244.3 L258.8 242.3 L257.9 240.4 L256.7 238.4 L256.1 236.5 L255.3 234.5 L254.5 232.4 L253.9 230.3 L253.0 228.2 L252.7 226.1 L251.9 223.9 L251.6 221.8 L251.5 219.7 L250.7 217.3 L250.0 214.9 L250.0 212.7 L249.8 210.4 L249.4 208.0 L249.9 206.0 L249.2 203.2 L249.7 201.1 L249.3 198.5 L250.2 196.5 L250.4 194.2 L250.1 191.4 L250.5 189.0 L251.5 187.1 L251.6 184.5 L252.6 182.5 L252.8 179.8 L253.9 177.8 L254.7 175.4 L254.7 172.4 L255.8 170.3 L256.6 167.9 L258.2 166.2 L259.3 164.0 L260.2 161.5 L261.6 159.5 L262.2 156.6 L263.8 154.7 L265.2 152.7 L266.6 150.6 L267.8 148.0 L269.5 146.3 L270.7 143.6 L272.7 142.1 L273.8 139.3 L275.4 137.2 L277.8 136.3 L279.6 134.2 L281.5 132.4 L283.6 130.9 L285.5 129.0 L287.5 127.1 L289.8 126.1 L292.0 124.7 L294.2 123.1 L296.1 121.0 L298.6 120.1 L300.7 118.1 L303.0 116.9 L305.2 115.0 L307.6 113.5 L310.1 112.5 L312.3 110.6 L314.8 109.3 L317.2 107.7 L319.8 106.5 L322.4 105.4 L325.0 104.5 L327.7 103.6 L330.4 103.5 L333.1 102.8 L335.8 102.0 L338.5 100.8 L341.4 101.4 L344.1 100.1 L346.9 100.1 L349.7 99.8 L352.5 99.5 L355.3 99.8 L358.1 100.1 L360.9 100.1 L363.6 101.4 L366.5 100.8 L369.2 102.0 L371.9 102.8 L374.6 103.5 L377.3 103.6 L380.0 104.5 L382.6 105.4 L385.2 106.5 L387.8 107.7 L390.2 109.3 L392.7 110.6 L394.9 112.5 L397.4 113.5 L399.8 115.0 L402.0 116.9 L404.3 118.1 L406.4 120.1 L408.9 121.0 L410.8 123.1 L413.0 124.7 L415.2 126.1 L417.5 127.1 L419.5 129.0 L421.4 130.9 L423.5 132.4 L425.4 134.2 L427.2 136.3 L429.6 137.2 L431.2 139.3 L432.3 142.1 L434.3 143.6 L435.5 146.3 L437.2 148.0 L438.4 150.6 L439.8 152.7 L441.2 154.7 L442.8 156.6 L443.4 159.5 L444.8 161.5 L445.7 164.0 L446.8 166.2 L448.4 167.9 L449.2 170.3 L450.3 172.4 L450.3 175.4 L451.1 177.8 L452.2 179.8 L452.4 182.5 L453.4 184.5 L453.5 187.1 L454.5 189.0 L454.9 191.4 L454.6 194.2 L454.8 196.5 L455.7 198.5 L455.3 201.1 L455.8 203.2 L455.1 206.0 L455.6 208.0 L455.2 210.4 L455.0 212.7 L455.0 214.9 L454.3 217.3 L453.5 219.7 L453.4 221.8 L453.1 223.9 L452.3 226.1 L452.0 228.2 L451.1 230.3 L450.5 232.4 L449.7 234.5 L448.9 236.5 L448.3 238.4 L447.1 240.4 L446.2 242.3 L444.4 244.3 L443.2 246.1 L442.5 247.9 L440.6 249.7 L440.1 251.3 L438.4 253.0 L436.5 254.6 L435.4 256.2 L433.5 257.7 L432.0 259.1 L430.7 260.5 L429.5 261.8 L427.8 263.1 L426.0 264.4 L424.2 265.5 L422.8 266.7 L421.6 267.8 L420.5 268.9 L419.2 269.9 L417.6 270.8 L416.7 271.8 L415.6 272.8 L414.2 273.6 L413.5 274.6 L411.9 275.3 L410.4 276.0 L409.3 276.8 L407.7 277.4 L407.0 278.2 L405.9 278.9 L403.6 279.1 L402.3 279.6 L401.3 280.2 L399.5 280.5 L398.9 281.2 L397.1 281.3 L396.1 281.7 L394.3 281.8 L392.7 281.9 L391.4 282.1 L390.0 282.1 L389.0 282.4 L388.6 283.1 L387.3 283.1 L386.4 283.3 L384.7 283.0 L384.4 283.7 L383.1 283.6 L382.1 283.6 L381.2 283.8 L380.4 283.9 L379.5 284.0 L379.4 284.7 L378.8 285.0 L378.5 285.6 L377.9 285.9 L377.5 286.4 L377.2 287.0 L376.8 287.5 L376.4 288.0 L376.2 288.8 L375.3 288.7 L374.6 288.8 L373.5 288.4 L372.1 287.5 L371.0 286.9 L369.4 285.5 L367.6 283.8 L365.7 281.6 L364.0 279.7 L362.9 278.5 L361.7 277.2 L361.0 276.4 L360.7 276.5 L360.4 276.7 L360.1 276.8 L359.8 276.9 L359.5 277.1 L359.8 278.7 L359.7 279.3 L360.0 281.1 L360.1 282.7 L359.9 283.3 L359.8 284.3 L358.3 280.8 L357.2 277.9 L356.9 278.0 L356.9 279.5 L357.0 281.7 L357.0 283.5 L357.0 285.9 L356.8 287.7 L356.8 291.1 L356.5 292.9 L356.3 296.3 L355.9 298.8 L355.3 300.8 L354.7 303.3 L354.1 305.8 L353.3 308.4 L352.5 311.3" fill="none" stroke="#ff00ff" stroke-width="1.35" stroke-linejoin="round"/><path d="M352.5 278.5 L352.2 278.5 L351.9 278.5 L351.6 278.5 L351.2 278.5 L350.9 278.4 L350.6 278.4 L350.3 278.4 L350.0 278.3 L349.7 278.3 L349.4 278.2 L349.1 278.2 L348.8 278.1 L348.5 278.0 L348.1 278.0 L347.8 277.9 L347.5 277.8 L347.2 277.7 L346.9 277.6 L346.6 277.5 L346.3 277.4 L346.0 277.3 L344.0 281.6 L342.7 283.5 L342.1 283.9 L341.4 284.3 L340.8 284.4 L340.8 283.5 L339.9 284.2 L339.6 283.8 L339.1 283.6 L338.6 283.6 L337.6 284.4 L337.2 284.1 L337.0 283.6 L336.2 283.7 L335.5 283.9 L334.9 283.9 L334.2 283.9 L333.5 283.9 L332.8 283.9 L332.2 283.9 L331.5 283.9 L330.3 284.3 L329.9 283.9 L329.1 283.9 L328.3 283.8 L327.4 283.9 L326.7 283.7 L325.1 284.3 L324.9 283.6 L323.8 283.7 L322.0 284.3 L321.2 284.1 L320.4 283.8 L319.4 283.7 L318.1 283.7 L316.6 283.8 L315.3 283.7 L313.4 284.0 L312.6 283.6 L310.8 283.6 L309.1 283.6 L307.4 283.5 L306.6 282.9 L305.3 282.5 L304.4 281.9 L303.0 281.5 L301.9 280.9 L300.2 280.6 L299.5 279.8 L297.4 279.5 L295.9 278.9 L293.7 278.5 L293.1 277.5 L290.6 277.1 L289.3 276.3 L287.3 275.6 L286.2 274.6 L284.1 273.8 L283.0 272.7 L281.8 271.7 L280.4 270.6 L278.6 269.6 L277.3 268.4 L275.5 267.2 L274.0 266.0 L271.7 264.7 L271.0 263.3 L268.3 262.0 L267.1 260.5 L265.9 259.0 L263.6 257.4 L261.4 255.7 L260.2 254.0 L258.6 252.3 L256.0 250.4 L254.5 248.5 L253.3 246.6 L252.0 244.6 L249.8 242.4 L248.9 240.4 L247.7 238.2 L245.9 235.9 L244.4 233.5 L243.4 231.3 L242.7 229.0 L241.8 226.6 L241.1 224.3 L240.2 221.8 L239.0 219.2 L237.9 216.5 L238.0 214.3 L237.1 211.5 L236.6 208.9 L235.7 206.0 L235.8 203.6 L235.0 200.6 L235.0 198.0 L235.1 195.4 L235.4 192.9 L235.9 190.4 L236.3 187.9 L237.3 185.7 L237.3 182.8 L238.6 180.8 L239.2 178.2 L239.7 175.5 L240.1 172.7 L241.6 170.7 L242.6 168.3 L243.1 165.4 L244.9 163.6 L245.7 160.9 L247.0 158.7 L248.4 156.4 L249.9 154.3 L251.6 152.3 L253.1 150.1 L254.7 148.0 L256.6 146.2 L258.1 143.9 L259.8 141.8 L261.5 139.8 L262.9 137.2 L265.0 135.6 L266.7 133.2 L268.1 130.5 L270.3 128.9 L272.5 127.4 L274.6 125.5 L276.8 124.0 L278.9 122.2 L281.3 120.9 L283.3 118.6 L285.7 117.3 L288.3 116.4 L290.7 114.9 L293.1 113.4 L295.5 111.9 L298.2 111.2 L300.7 110.1 L303.4 109.3 L305.7 107.6 L308.6 107.4 L311.1 106.0 L313.7 105.1 L316.4 104.3 L319.3 104.3 L321.8 102.8 L324.5 102.0 L327.4 102.0 L330.2 102.0 L333.0 101.3 L335.7 100.5 L338.5 100.8 L341.2 99.6 L344.1 100.0 L346.9 99.7 L349.7 99.6 L352.5 99.5 L355.3 99.6 L358.1 99.7 L360.9 100.0 L363.8 99.6 L366.5 100.8 L369.3 100.5 L372.0 101.3 L374.8 102.0 L377.6 102.0 L380.5 102.0 L383.2 102.8 L385.7 104.3 L388.6 104.3 L391.3 105.1 L393.9 106.0 L396.4 107.4 L399.3 107.6 L401.6 109.3 L404.3 110.1 L406.8 111.2 L409.5 111.9 L411.9 113.4 L414.3 114.9 L416.7 116.4 L419.3 117.3 L421.7 118.6 L423.7 120.9 L426.1 122.2 L428.2 124.0 L430.4 125.5 L432.5 127.4 L434.7 128.9 L436.9 130.5 L438.3 133.2 L440.0 135.6 L442.1 137.2 L443.5 139.8 L445.2 141.8 L446.9 143.9 L448.4 146.2 L450.3 148.0 L451.9 150.1 L453.4 152.3 L455.1 154.3 L456.6 156.4 L458.0 158.7 L459.3 160.9 L460.1 163.6 L461.9 165.4 L462.4 168.3 L463.4 170.7 L464.9 172.7 L465.3 175.5 L465.8 178.2 L466.4 180.8 L467.7 182.8 L467.7 185.7 L468.7 187.9 L469.1 190.4 L469.6 192.9 L469.9 195.4 L470.0 198.0 L470.0 200.6 L469.2 203.6 L469.3 206.0 L468.4 208.9 L467.9 211.5 L467.0 214.3 L467.1 216.5 L466.0 219.2 L464.8 221.8 L463.9 224.3 L463.2 226.6 L462.3 229.0 L461.6 231.3 L460.6 233.5 L459.1 235.9 L457.3 238.2 L456.1 240.4 L455.2 242.4 L453.0 244.6 L451.7 246.6 L450.5 248.5 L449.0 250.4 L446.4 252.3 L444.8 254.0 L443.6 255.7 L441.4 257.4 L439.1 259.0 L437.9 260.5 L436.7 262.0 L434.0 263.3 L433.3 264.7 L431.0 266.0 L429.5 267.2 L427.7 268.4 L426.4 269.6 L424.6 270.6 L423.2 271.7 L422.0 272.7 L420.9 273.8 L418.8 274.6 L417.7 275.6 L415.7 276.3 L414.4 277.1 L411.9 277.5 L411.3 278.5 L409.1 278.9 L407.6 279.5 L405.5 279.8 L404.8 280.6 L403.1 280.9 L402.0 281.5 L400.6 281.9 L399.7 282.5 L398.4 282.9 L397.6 283.5 L395.9 283.6 L394.2 283.6 L392.4 283.6 L391.6 284.0 L389.7 283.7 L388.4 283.8 L386.9 283.7 L385.6 283.7 L384.6 283.8 L383.8 284.1 L383.0 284.3 L381.2 283.7 L380.1 283.6 L379.9 284.3 L378.3 283.7 L377.6 283.9 L376.7 283.8 L375.9 283.9 L375.1 283.9 L374.7 284.3 L373.5 283.9 L372.8 283.9 L372.2 283.9 L371.5 283.9 L370.8 283.9 L370.1 283.9 L369.5 283.9 L368.8 283.7 L368.0 283.6 L367.8 284.1 L367.4 284.4 L366.4 283.6 L365.9 283.6 L365.4 283.8 L365.1 284.2 L364.2 283.5 L364.2 284.4 L363.6 284.3 L362.9 283.9 L362.3 283.5 L361.0 281.6 L359.0 277.3 L358.7 277.4 L358.4 277.5 L358.1 277.6 L357.8 277.7 L357.5 277.8 L357.2 277.9 L356.9 278.0 L356.5 278.0 L356.2 278.1 L355.9 278.2 L355.6 278.2 L355.3 278.3 L355.0 278.3 L354.7 278.4 L354.4 278.4 L354.1 278.4 L353.8 278.5 L353.4 278.5 L353.1 278.5 L352.8 278.5 L352.5 278.5" fill="none" stroke="#80ffff" stroke-width="1.35" stroke-linejoin="round"/><path d="M352.5 278.5 L352.2 278.5 L351.9 278.5 L351.6 278.5 L351.2 278.5 L350.9 278.4 L350.6 278.4 L350.3 278.4 L350.0 278.3 L349.7 278.3 L349.4 278.2 L349.1 278.2 L348.8 278.1 L348.5 278.0 L348.1 278.0 L347.8 277.9 L347.5 277.8 L347.2 277.7 L346.9 277.6 L346.6 277.5 L346.3 277.4 L346.0 277.3 L345.8 277.2 L345.5 277.1 L345.2 276.9 L344.9 276.8 L344.6 276.7 L344.3 276.5 L344.0 276.4 L343.8 276.2 L343.5 276.1 L343.2 275.9 L343.0 275.8 L342.7 275.6 L342.4 275.4 L342.2 275.2 L341.9 275.1 L341.7 274.9 L341.4 274.7 L341.2 274.5 L340.9 274.3 L340.7 274.1 L340.5 273.9 L340.2 273.7 L340.0 273.4 L339.8 273.2 L339.6 273.0 L339.3 272.8 L339.1 272.5 L338.9 272.3 L338.7 272.1 L338.5 271.8 L338.3 271.6 L338.1 271.3 L337.9 271.1 L337.8 270.8 L337.6 270.6 L337.4 270.3 L337.2 270.0 L337.1 269.8 L336.9 269.5 L336.8 269.2 L336.6 269.0 L336.5 268.7 L336.3 268.4 L336.2 268.1 L336.1 267.8 L335.9 267.5 L335.8 267.2 L335.7 267.0 L335.6 266.7 L335.5 266.4 L335.4 266.1 L335.3 265.8 L335.2 265.5 L335.1 265.2 L335.0 264.9 L335.0 264.5 L334.9 264.2 L334.8 263.9 L334.8 263.6 L334.7 263.3 L334.7 263.0 L334.6 262.7 L334.6 262.4 L334.6 262.1 L334.5 261.8 L334.5 261.4 L334.5 261.1 L334.5 260.8 L334.5 260.5 L320.7 259.9 L318.2 259.3 L316.3 258.6 L312.8 257.7 L311.3 256.9 L308.7 255.9 L306.2 254.8 L303.2 253.6 L300.7 252.3 L299.3 251.1 L296.7 249.7 L294.1 248.1 L292.3 246.6 L290.0 244.9 L288.3 243.3 L286.5 241.6 L285.0 239.9 L282.5 237.7 L280.9 235.8 L279.4 233.9 L277.4 231.7 L275.2 229.3 L274.3 227.3 L273.1 225.1 L271.5 222.7 L270.2 220.4 L269.4 218.2 L269.0 216.1 L268.9 214.1 L267.7 211.6 L267.6 209.5 L267.4 207.3 L267.2 205.1 L266.6 202.6 L266.5 200.3 L265.9 197.6 L266.2 195.5 L266.4 193.2 L265.7 190.2 L265.7 187.6 L265.9 185.2 L266.4 183.0 L266.8 180.6 L266.5 177.5 L267.1 175.1 L268.0 172.9 L268.2 170.1 L269.1 167.9 L270.1 165.7 L270.7 163.0 L271.8 160.9 L273.0 158.8 L274.2 156.5 L275.4 154.4 L276.2 151.6 L277.9 149.9 L278.9 147.2 L280.7 145.6 L282.1 143.4 L283.4 140.8 L285.1 139.0 L286.7 136.7 L288.3 134.5 L289.9 132.2 L291.6 130.0 L293.5 128.1 L295.2 125.6 L297.3 123.8 L299.1 121.3 L301.2 119.6 L303.5 118.1 L305.6 116.3 L307.9 114.7 L310.4 113.8 L312.5 111.4 L315.1 110.5 L317.7 109.7 L320.2 108.4 L322.6 106.9 L325.3 106.5 L327.8 104.8 L330.5 104.1 L333.2 103.4 L336.0 103.1 L338.7 102.4 L341.4 101.4 L344.1 100.6 L346.9 100.4 L349.7 99.9 L352.5 99.5 L355.3 99.9 L358.1 100.4 L360.9 100.6 L363.6 101.4 L366.3 102.4 L369.0 103.1 L371.8 103.4 L374.5 104.1 L377.2 104.8 L379.7 106.5 L382.4 106.9 L384.8 108.4 L387.3 109.7 L389.9 110.5 L392.5 111.4 L394.6 113.8 L397.1 114.7 L399.4 116.3 L401.5 118.1 L403.8 119.6 L405.9 121.3 L407.7 123.8 L409.8 125.6 L411.5 128.1 L413.4 130.0 L415.1 132.2 L416.7 134.5 L418.3 136.7 L419.9 139.0 L421.6 140.8 L422.9 143.4 L424.3 145.6 L426.1 147.2 L427.1 149.9 L428.8 151.6 L429.6 154.4 L430.8 156.5 L432.0 158.8 L433.2 160.9 L434.3 163.0 L434.9 165.7 L435.9 167.9 L436.8 170.1 L437.0 172.9 L437.9 175.1 L438.5 177.5 L438.2 180.6 L438.6 183.0 L439.1 185.2 L439.3 187.6 L439.3 190.2 L438.6 193.2 L438.8 195.5 L439.1 197.6 L438.5 200.3 L438.4 202.6 L437.8 205.1 L437.6 207.3 L437.4 209.5 L437.3 211.6 L436.1 214.1 L436.0 216.1 L435.6 218.2 L434.8 220.4 L433.5 222.7 L431.9 225.1 L430.7 227.3 L429.8 229.3 L427.6 231.7 L425.6 233.9 L424.1 235.8 L422.5 237.7 L420.0 239.9 L418.5 241.6 L416.7 243.3 L415.0 244.9 L412.7 246.6 L410.9 248.1 L408.3 249.7 L405.7 251.1 L404.3 252.3 L401.8 253.6 L398.8 254.8 L396.3 255.9 L393.7 256.9 L392.2 257.7 L388.7 258.6 L386.8 259.3 L384.3 259.9 L370.5 260.5 L370.5 260.8 L370.5 261.1 L370.5 261.4 L370.5 261.8 L370.4 262.1 L370.4 262.4 L370.4 262.7 L370.3 263.0 L370.3 263.3 L370.2 263.6 L370.2 263.9 L370.1 264.2 L370.0 264.5 L370.0 264.9 L369.9 265.2 L369.8 265.5 L369.7 265.8 L369.6 266.1 L369.5 266.4 L369.4 266.7 L369.3 267.0 L369.2 267.2 L369.1 267.5 L368.9 267.8 L368.8 268.1 L368.7 268.4 L368.5 268.7 L368.4 269.0 L368.2 269.2 L368.1 269.5 L367.9 269.8 L367.8 270.0 L367.6 270.3 L367.4 270.6 L367.2 270.8 L367.1 271.1 L366.9 271.3 L366.7 271.6 L366.5 271.8 L366.3 272.1 L366.1 272.3 L365.9 272.5 L365.7 272.8 L365.4 273.0 L365.2 273.2 L365.0 273.4 L364.8 273.7 L364.5 273.9 L364.3 274.1 L364.1 274.3 L363.8 274.5 L363.6 274.7 L363.3 274.9 L363.1 275.1 L362.8 275.2 L362.6 275.4 L362.3 275.6 L362.0 275.8 L361.8 275.9 L361.5 276.1 L361.2 276.2 L361.0 276.4 L360.7 276.5 L360.4 276.7 L360.1 276.8 L359.8 276.9 L359.5 277.1 L359.2 277.2 L359.0 277.3 L358.7 277.4 L358.4 277.5 L358.1 277.6 L357.8 277.7 L357.5 277.8 L357.2 277.9 L356.9 278.0 L356.5 278.0 L356.2 278.1 L355.9 278.2 L355.6 278.2 L355.3 278.3 L355.0 278.3 L354.7 278.4 L354.4 278.4 L354.1 278.4 L353.8 278.5 L353.4 278.5 L353.1 278.5 L352.8 278.5 L352.5 278.5" fill="none" stroke="#c0c0c0" stroke-width="1.35" stroke-linejoin="round"/><path d="M360 100.2 H366.5 M338.5 100.2 H345" stroke="#00ff00" stroke-width="1.2" fill="none"/><g shape-rendering="auto" font-family="Liberation Sans, sans-serif" font-size="12" fill="#cfcfcf" text-anchor="middle"><text transform="translate(352.8,61.0) scale(0.93,1)">6</text><text transform="translate(352.8,79.0) scale(0.93,1)">dB</text><text transform="translate(352.8,96.7) scale(0.93,1)">0</text><text transform="translate(352.8,132.2) scale(0.93,1)">-6</text><text transform="translate(352.8,167.8) scale(0.93,1)">-12</text><text transform="translate(352.8,204.1) scale(0.93,1)">-18</text><text transform="translate(352.8,239.3) scale(0.93,1)">-24</text><text transform="translate(246,87.1) scale(0.93,1)">-30</text><text transform="translate(458,87.1) scale(0.93,1)">30</text><text transform="translate(175,159.1) scale(0.93,1)">-60</text><text transform="translate(530,159.1) scale(0.93,1)">60</text><text transform="translate(148,265.1) scale(0.93,1)">-90</text><text transform="translate(556,265.1) scale(0.93,1)">90</text><text transform="translate(171,370.1) scale(0.93,1)">-120</text><text transform="translate(533,370.1) scale(0.93,1)">120</text><text transform="translate(243,442.1) scale(0.93,1)">-150</text><text transform="translate(461,442.1) scale(0.93,1)">150</text><text transform="translate(352,468.1) scale(0.93,1)">180</text></g></svg>
<div class="pb0"></div><div style="position:absolute;left:3px;top:33px;width:638px;height:1px;background:#001a38"></div><div class="pb1"></div><div class="pb2"></div>
<div class="nb" style="top:56px">1</div><svg class="cs" style="top:56px" viewBox="0 0 16 17"><path d="M1 0 H14.5 L16 1.5 V15 L14.5 16.5 L13 15 V3 H0 Z" fill="#ff0000"/></svg><div class="cb" style="top:59px"><svg width="11" height="11" viewBox="0 0 11 11"><path d="M1.5 5.6 L4 8.2 L9.8 2.4" fill="none" stroke="#444" stroke-width="1.3"/></svg></div><div class="lb" style="top:80px;color:#ff0000">63 Hz</div><div class="nb" style="top:102px">2</div><svg class="cs" style="top:102px" viewBox="0 0 16 17"><path d="M1 0 H14.5 L16 1.5 V15 L14.5 16.5 L13 15 V3 H0 Z" fill="#ffffff"/></svg><div class="cb" style="top:105px"><svg width="11" height="11" viewBox="0 0 11 11"><path d="M1.5 5.6 L4 8.2 L9.8 2.4" fill="none" stroke="#444" stroke-width="1.3"/></svg></div><div class="lb" style="top:126px;color:#ffffff">125 Hz</div><div class="nb" style="top:148px">3</div><svg class="cs" style="top:148px" viewBox="0 0 16 17"><path d="M1 0 H14.5 L16 1.5 V15 L14.5 16.5 L13 15 V3 H0 Z" fill="#00ff00"/></svg><div class="cb" style="top:151px"><svg width="11" height="11" viewBox="0 0 11 11"><path d="M1.5 5.6 L4 8.2 L9.8 2.4" fill="none" stroke="#444" stroke-width="1.3"/></svg></div><div class="lb" style="top:172px;color:#00ff00">250 Hz</div><div class="nb" style="top:194px">4</div><svg class="cs" style="top:194px" viewBox="0 0 16 17"><path d="M1 0 H14.5 L16 1.5 V15 L14.5 16.5 L13 15 V3 H0 Z" fill="#ffff00"/></svg><div class="cb" style="top:197px"><svg width="11" height="11" viewBox="0 0 11 11"><path d="M1.5 5.6 L4 8.2 L9.8 2.4" fill="none" stroke="#444" stroke-width="1.3"/></svg></div><div class="lb" style="top:218px;color:#ffff00">500 Hz</div><div class="nb" style="top:240px">5</div><svg class="cs" style="top:240px" viewBox="0 0 16 17"><path d="M1 0 H14.5 L16 1.5 V15 L14.5 16.5 L13 15 V3 H0 Z" fill="#ff8000"/></svg><div class="cb" style="top:243px"><svg width="11" height="11" viewBox="0 0 11 11"><path d="M1.5 5.6 L4 8.2 L9.8 2.4" fill="none" stroke="#444" stroke-width="1.3"/></svg></div><div class="lb" style="top:264px;color:#ff8000">1000 Hz</div><div class="nb" style="top:286px">6</div><svg class="cs" style="top:286px" viewBox="0 0 16 17"><path d="M1 0 H14.5 L16 1.5 V15 L14.5 16.5 L13 15 V3 H0 Z" fill="#0000ff"/></svg><div class="cb" style="top:289px"><svg width="11" height="11" viewBox="0 0 11 11"><path d="M1.5 5.6 L4 8.2 L9.8 2.4" fill="none" stroke="#444" stroke-width="1.3"/></svg></div><div class="lb" style="top:310px;color:#0000ff">2000 Hz</div><div class="nb" style="top:332px">7</div><svg class="cs" style="top:332px" viewBox="0 0 16 17"><path d="M1 0 H14.5 L16 1.5 V15 L14.5 16.5 L13 15 V3 H0 Z" fill="#ff00ff"/></svg><div class="cb" style="top:335px"><svg width="11" height="11" viewBox="0 0 11 11"><path d="M1.5 5.6 L4 8.2 L9.8 2.4" fill="none" stroke="#444" stroke-width="1.3"/></svg></div><div class="lb" style="top:356px;color:#ff00ff">4000 Hz</div><div class="nb" style="top:378px">8</div><svg class="cs" style="top:378px" viewBox="0 0 16 17"><path d="M1 0 H14.5 L16 1.5 V15 L14.5 16.5 L13 15 V3 H0 Z" fill="#80ffff"/></svg><div class="cb" style="top:381px"><svg width="11" height="11" viewBox="0 0 11 11"><path d="M1.5 5.6 L4 8.2 L9.8 2.4" fill="none" stroke="#444" stroke-width="1.3"/></svg></div><div class="lb" style="top:402px;color:#80ffff">8000 Hz</div><div class="nb" style="top:424px">9</div><svg class="cs" style="top:424px" viewBox="0 0 16 17"><path d="M1 0 H14.5 L16 1.5 V15 L14.5 16.5 L13 15 V3 H0 Z" fill="#c0c0c0"/></svg><div class="cb" style="top:427px"><svg width="11" height="11" viewBox="0 0 11 11"><path d="M1.5 5.6 L4 8.2 L9.8 2.4" fill="none" stroke="#444" stroke-width="1.3"/></svg></div><div class="lb" style="top:448px;color:#c0c0c0">16000 Hz</div>
<div class="status"><span style="left:1.5px;letter-spacing:-0.58px">Rogers_O</span><span style="left:61px;letter-spacing:-0.2px">1 Octave</span><span style="left:115.5px;letter-spacing:0.28px">Mirrored</span>
<svg style="position:absolute;right:0;bottom:0" width="12" height="12" viewBox="0 0 12 12" shape-rendering="crispEdges"><g fill="#bababa"><rect x="8" y="2" width="2" height="2"/><rect x="5" y="5" width="2" height="2"/><rect x="8" y="5" width="2" height="2"/><rect x="2" y="8" width="2" height="2"/><rect x="5" y="8" width="2" height="2"/><rect x="8" y="8" width="2" height="2"/></g></svg>
</div>
</body></html>
